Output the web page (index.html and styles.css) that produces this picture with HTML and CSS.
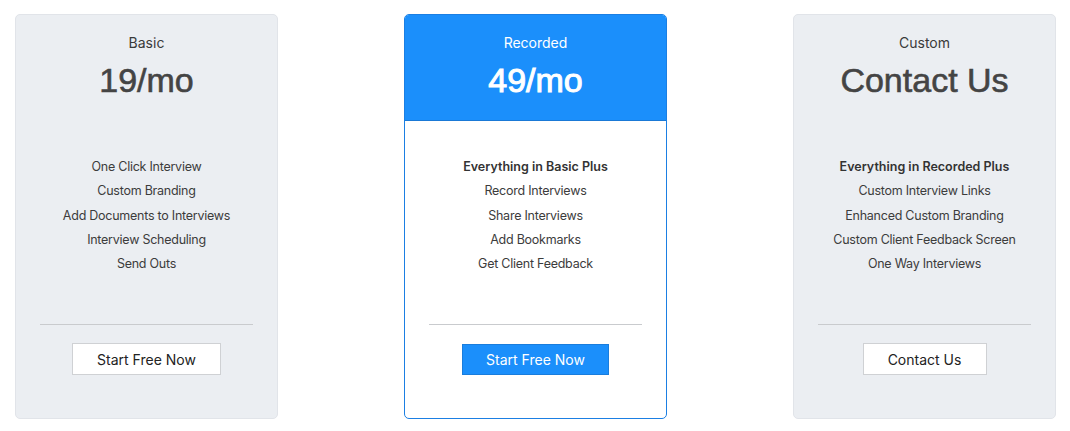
FILE: index.html
```html
<!DOCTYPE html>
<html>
<head>
<meta charset="utf-8">
<link rel="stylesheet" href="styles.css">
</head>
<body>
<div class="plans">
  <div class="card">
    <div class="card-head">
      <div class="plan-name">Basic</div>
      <div class="plan-price">19/mo</div>
    </div>
    <ul class="features">
      <li>One Click Interview</li>
      <li>Custom Branding</li>
      <li>Add Documents to Interviews</li>
      <li>Interview Scheduling</li>
      <li>Send Outs</li>
    </ul>
    <div class="divider"></div>
    <div class="actions"><a class="btn">Start Free Now</a></div>
  </div>
  <div class="card card-featured">
    <div class="card-head">
      <div class="plan-name">Recorded</div>
      <div class="plan-price">49/mo</div>
    </div>
    <ul class="features">
      <li class="strong">Everything in Basic Plus</li>
      <li>Record Interviews</li>
      <li>Share Interviews</li>
      <li>Add Bookmarks</li>
      <li>Get Client Feedback</li>
    </ul>
    <div class="divider"></div>
    <div class="actions"><a class="btn btn-primary">Start Free Now</a></div>
  </div>
  <div class="card">
    <div class="card-head">
      <div class="plan-name">Custom</div>
      <div class="plan-price">Contact Us</div>
    </div>
    <ul class="features">
      <li class="strong">Everything in Recorded Plus</li>
      <li>Custom Interview Links</li>
      <li>Enhanced Custom Branding</li>
      <li>Custom Client Feedback Screen</li>
      <li>One Way Interviews</li>
    </ul>
    <div class="divider"></div>
    <div class="actions"><a class="btn btn-contact">Contact Us</a></div>
  </div>
</div>
</body>
</html>
```
FILE: styles.css
```css
* { box-sizing: border-box; }
html, body { margin: 0; padding: 0; background: #fff; }
body { font-family: Inter, "Liberation Sans", Arial, sans-serif; color: #333; }
.plans {
  display: flex;
  gap: 126px;
  padding: 14px 14px 0 15px;
}
.card {
  width: 263px;
  height: 405px;
  background: #ebeef2;
  border: 1px solid #e1e4e9;
  border-radius: 5px;
  display: flex;
  flex-direction: column;
  overflow: hidden;
}
.card-head {
  height: 106px;
  padding-top: 18px;
  text-align: center;
}
.plan-name {
  font-size: 14px;
  line-height: 20px;
  color: #3a3a3a;
}
.plan-price {
  margin-top: 7px;
  font-family: "Liberation Sans", Arial, sans-serif;
  font-size: 34px;
  line-height: 40px;
  color: #444;
  -webkit-text-stroke: 0.6px currentColor;
}
.features {
  list-style: none;
  margin: 0;
  padding: 34px 0 0;
  text-align: center;
  font-size: 12.5px;
  line-height: 24.3px;
  letter-spacing: -0.25px;
  color: #3c3c3c;
  height: 203px;
}
.features .strong { font-weight: 600; color: #333; letter-spacing: 0; }
.divider {
  height: 1px;
  background: #c9cbce;
  margin: 0 24px;
}
.actions {
  padding-top: 18px;
  display: flex;
  justify-content: center;
}
.btn {
  display: block;
  width: 149px;
  height: 32px;
  line-height: 31px;
  text-align: center;
  background: #fff;
  border: 1px solid #cfd1d4;
  font-size: 14px;
  color: #222;
}
.btn-contact { width: 124px; }
.card-featured {
  background: #fff;
  border-color: #1b7fe3;
}
.card-featured .card-head {
  background: #1b8ffb;
  border-bottom: 1px solid #1a79d6;
}
.card-featured .plan-name,
.card-featured .plan-price { color: #fff; }
.card-featured .plan-price { -webkit-text-stroke: 1px #fff; }
.btn-primary {
  width: 147px;
  height: 31px;
  margin-top: 1px;
  line-height: 30px;
  background: #1b8ffb;
  border-color: #1a7ddc;
  color: #fff;
}
```
